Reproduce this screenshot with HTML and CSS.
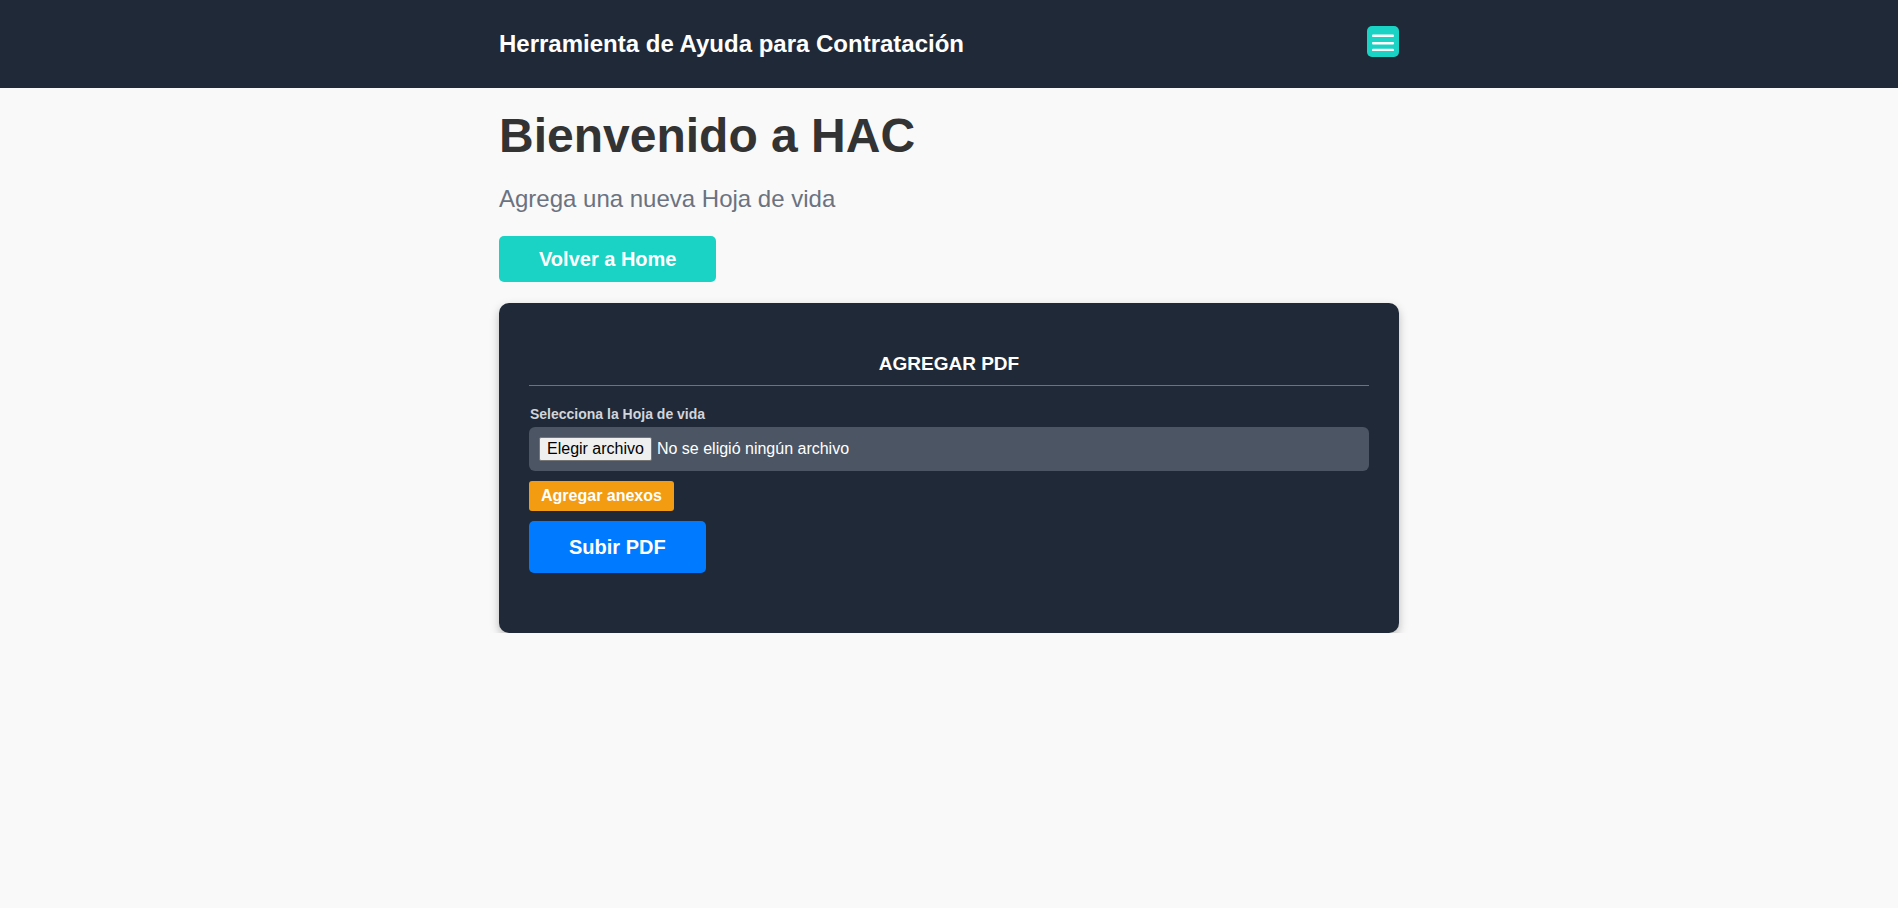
FILE: index.html
```html
<!DOCTYPE html>
<html lang="es">
<head>
<meta charset="utf-8">
<title>HAC - Agregar Hoja de vida</title>
<link rel="stylesheet" href="styles.css">
</head>
<body>
<header class="topbar">
  <div class="topbar-inner">
    <div class="brand">Herramienta de Ayuda para Contratación</div>
    <button class="menu-btn" type="button" aria-label="Menú">
      <svg width="22" height="18" viewBox="0 0 22 18" aria-hidden="true">
        <rect x="0" y="1.5" width="22" height="2.6" rx="1" fill="#ffffff"/>
        <rect x="0" y="9" width="22" height="2.6" rx="1" fill="#ffffff"/>
        <rect x="0" y="15.8" width="22" height="2.6" rx="1" fill="#ffffff"/>
      </svg>
    </button>
  </div>
</header>
<main class="page">
  <h1 class="title">Bienvenido a HAC</h1>
  <p class="subtitle">Agrega una nueva Hoja de vida</p>
  <a class="btn-home" href="#">Volver a Home</a>
  <section class="card">
    <h2 class="card-title">AGREGAR PDF</h2>
    <form class="form">
      <label class="field-label" for="cv">Selecciona la Hoja de vida</label>
      <div class="file-box">
        <label class="file-btn" for="cv">Elegir archivo</label>
        <span class="file-name">No se eligió ningún archivo</span>
        <input class="file-input" id="cv" type="file" accept="application/pdf">
      </div>
      <button class="btn-annex" type="button">Agregar anexos</button>
      <button class="btn-submit" type="submit">Subir PDF</button>
    </form>
  </section>
</main>
</body>
</html>
```

FILE: styles.css
```css
* {
  box-sizing: border-box;
}

html, body {
  margin: 0;
  padding: 0;
}

body {
  background: #f9f9f9;
  font-family: "Liberation Sans", Arial, sans-serif;
  color: #333333;
}

.topbar {
  background: #1f2937;
  height: 88px;
}

.topbar-inner {
  width: 900px;
  margin: 0 auto;
  height: 100%;
  display: flex;
  align-items: center;
  justify-content: space-between;
}

.brand {
  color: #ffffff;
  font-size: 24px;
  font-weight: 700;
  margin-top: -1px;
}

.menu-btn {
  width: 32px;
  height: 31px;
  border: none;
  border-radius: 5px;
  background: #1ad3c5;
  padding: 0;
  display: flex;
  align-items: center;
  justify-content: center;
  margin-top: -5px;
  cursor: pointer;
}

.page {
  width: 900px;
  margin: 0 auto;
}

.title {
  margin: 20px 0 0;
  font-size: 48px;
  font-weight: 700;
  color: #333333;
  line-height: normal;
}

.subtitle {
  margin: 22px 0 0;
  font-size: 24px;
  color: #6b7280;
  line-height: normal;
}

.btn-home {
  display: inline-block;
  margin-top: 23px;
  height: 46px;
  line-height: 46px;
  padding: 0 40px;
  background: #1ad3c5;
  color: #ffffff;
  font-size: 20px;
  font-weight: 700;
  border-radius: 5px;
  text-decoration: none;
}

.card {
  margin-top: 21px;
  background: #1f2937;
  border-radius: 10px;
  padding: 30px 30px 60px;
  box-shadow: 0 4px 10px rgba(0, 0, 0, 0.25);
}

.card-title {
  margin: 20px 0 0;
  padding-bottom: 10px;
  border-bottom: 1px solid #6b7280;
  text-align: center;
  color: #ffffff;
  font-size: 19px;
  font-weight: 700;
  line-height: normal;
}

.form {
  display: flex;
  flex-direction: column;
  align-items: flex-start;
  margin-top: 20px;
}

.field-label {
  display: block;
  font-size: 14px;
  font-weight: 700;
  color: #d1d5db;
  margin-left: 1px;
  line-height: 16px;
}

.file-box {
  margin-top: 5px;
  width: 100%;
  height: 44px;
  padding: 0 10px;
  background: #4b5563;
  border-radius: 6px;
  display: flex;
  align-items: center;
  position: relative;
}

.file-btn {
  display: inline-block;
  background: #efefef;
  color: #000000;
  border: 1px solid #767676;
  border-radius: 2px;
  padding: 1px 7px;
  font-size: 16px;
  line-height: 20px;
  margin-right: 5px;
  cursor: pointer;
}

.file-name {
  color: #ffffff;
  font-size: 16px;
}

.file-input {
  position: absolute;
  width: 1px;
  height: 1px;
  opacity: 0;
  overflow: hidden;
}

.btn-annex {
  margin-top: 10px;
  height: 30px;
  padding: 0 12px;
  background: #f39c12;
  color: #ffffff;
  border: none;
  border-radius: 3px;
  font-family: "Liberation Sans", Arial, sans-serif;
  font-size: 16px;
  font-weight: 700;
  cursor: pointer;
}

.btn-submit {
  margin-top: 10px;
  height: 52px;
  padding: 0 40px;
  background: #007bff;
  color: #ffffff;
  border: none;
  border-radius: 5px;
  font-family: "Liberation Sans", Arial, sans-serif;
  font-size: 20px;
  font-weight: 700;
  cursor: pointer;
}
```
